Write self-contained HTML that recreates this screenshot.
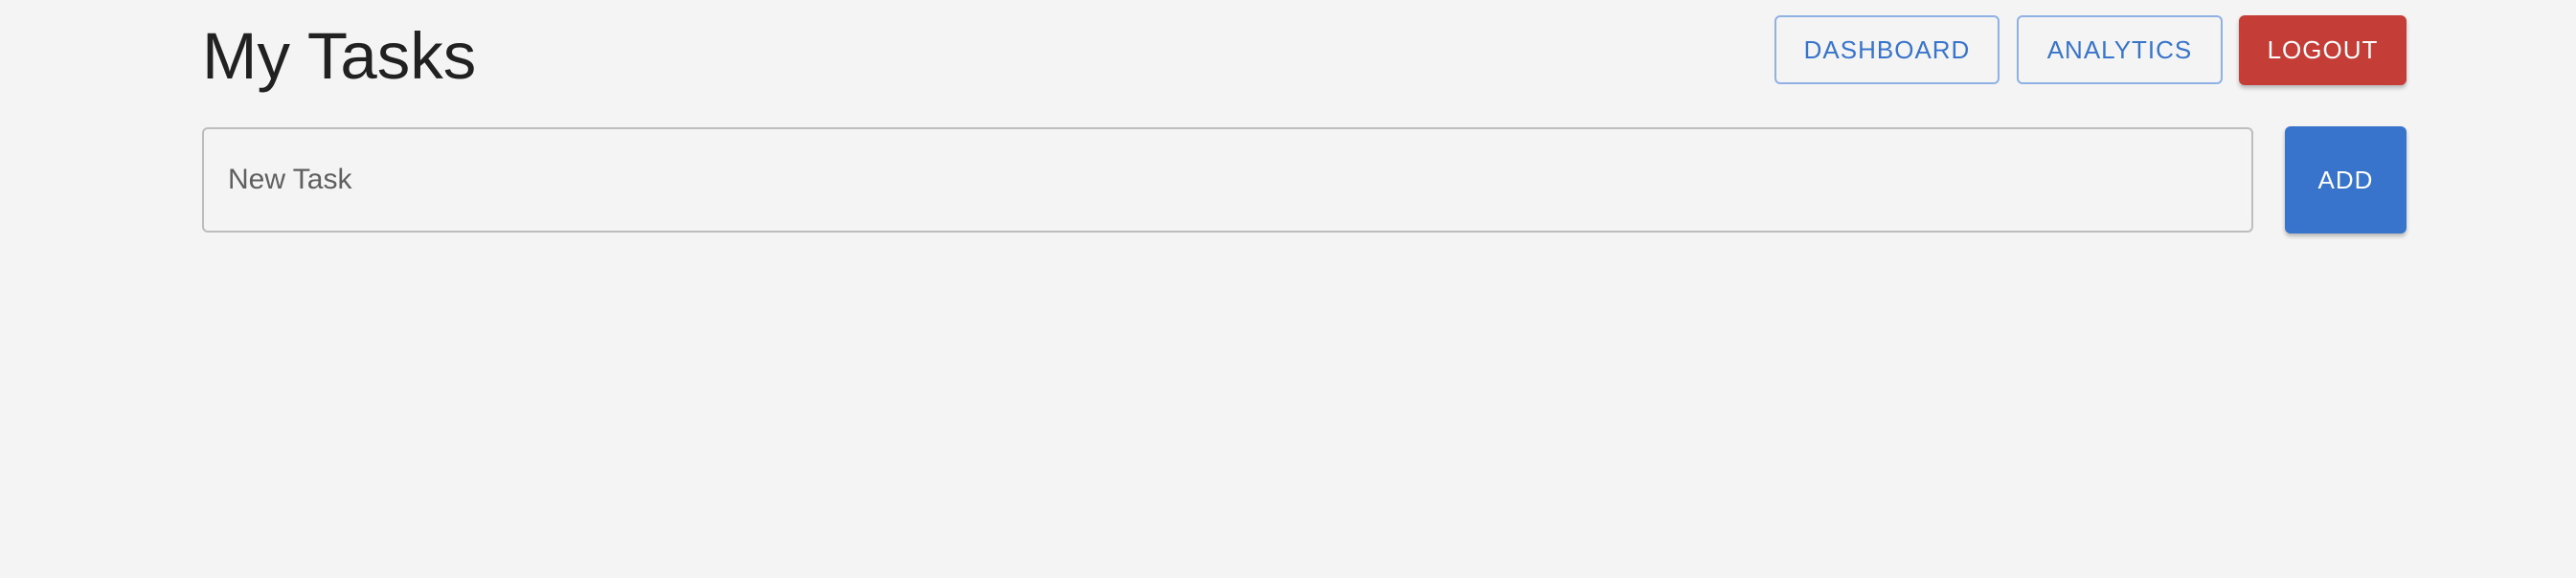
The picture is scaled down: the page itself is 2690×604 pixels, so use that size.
<!DOCTYPE html>
<html><head><style>
html,body{margin:0;padding:0;background:#f4f4f4;width:2690px;height:604px;overflow:hidden;font-family:"Liberation Sans",sans-serif;}
.t{position:absolute;left:211px;top:15px;font-size:69px;color:#212121;line-height:88px;}
.b{position:absolute;box-sizing:border-box;display:flex;align-items:center;justify-content:center;font-size:26px;letter-spacing:1px;border-radius:6px;}
.o{border:2px solid #8fb1e3;color:#3874cb;}
.in{position:absolute;left:211px;top:133px;width:2142px;height:110px;box-sizing:border-box;border:2px solid #bdbdbd;border-radius:6px;}
.ph{position:absolute;left:238px;top:168px;font-size:30px;color:#5f5f5f;line-height:40px;}
</style></head><body>
<div class="t">My Tasks</div>
<div class="b o" style="left:1853px;top:16px;width:235px;height:72px;">DASHBOARD</div>
<div class="b o" style="left:2106px;top:16px;width:215px;height:72px;">ANALYTICS</div>
<div class="b" style="left:2338px;top:16px;width:175px;height:73px;background:#c43e37;color:#fff;box-shadow:0 3px 4px rgba(0,0,0,.25);">LOGOUT</div>
<div class="in"></div>
<div class="ph">New Task</div>
<div class="b" style="left:2386px;top:132px;width:127px;height:112px;background:#3874cb;color:#fff;box-shadow:0 3px 4px rgba(0,0,0,.25);">ADD</div>
</body></html>
